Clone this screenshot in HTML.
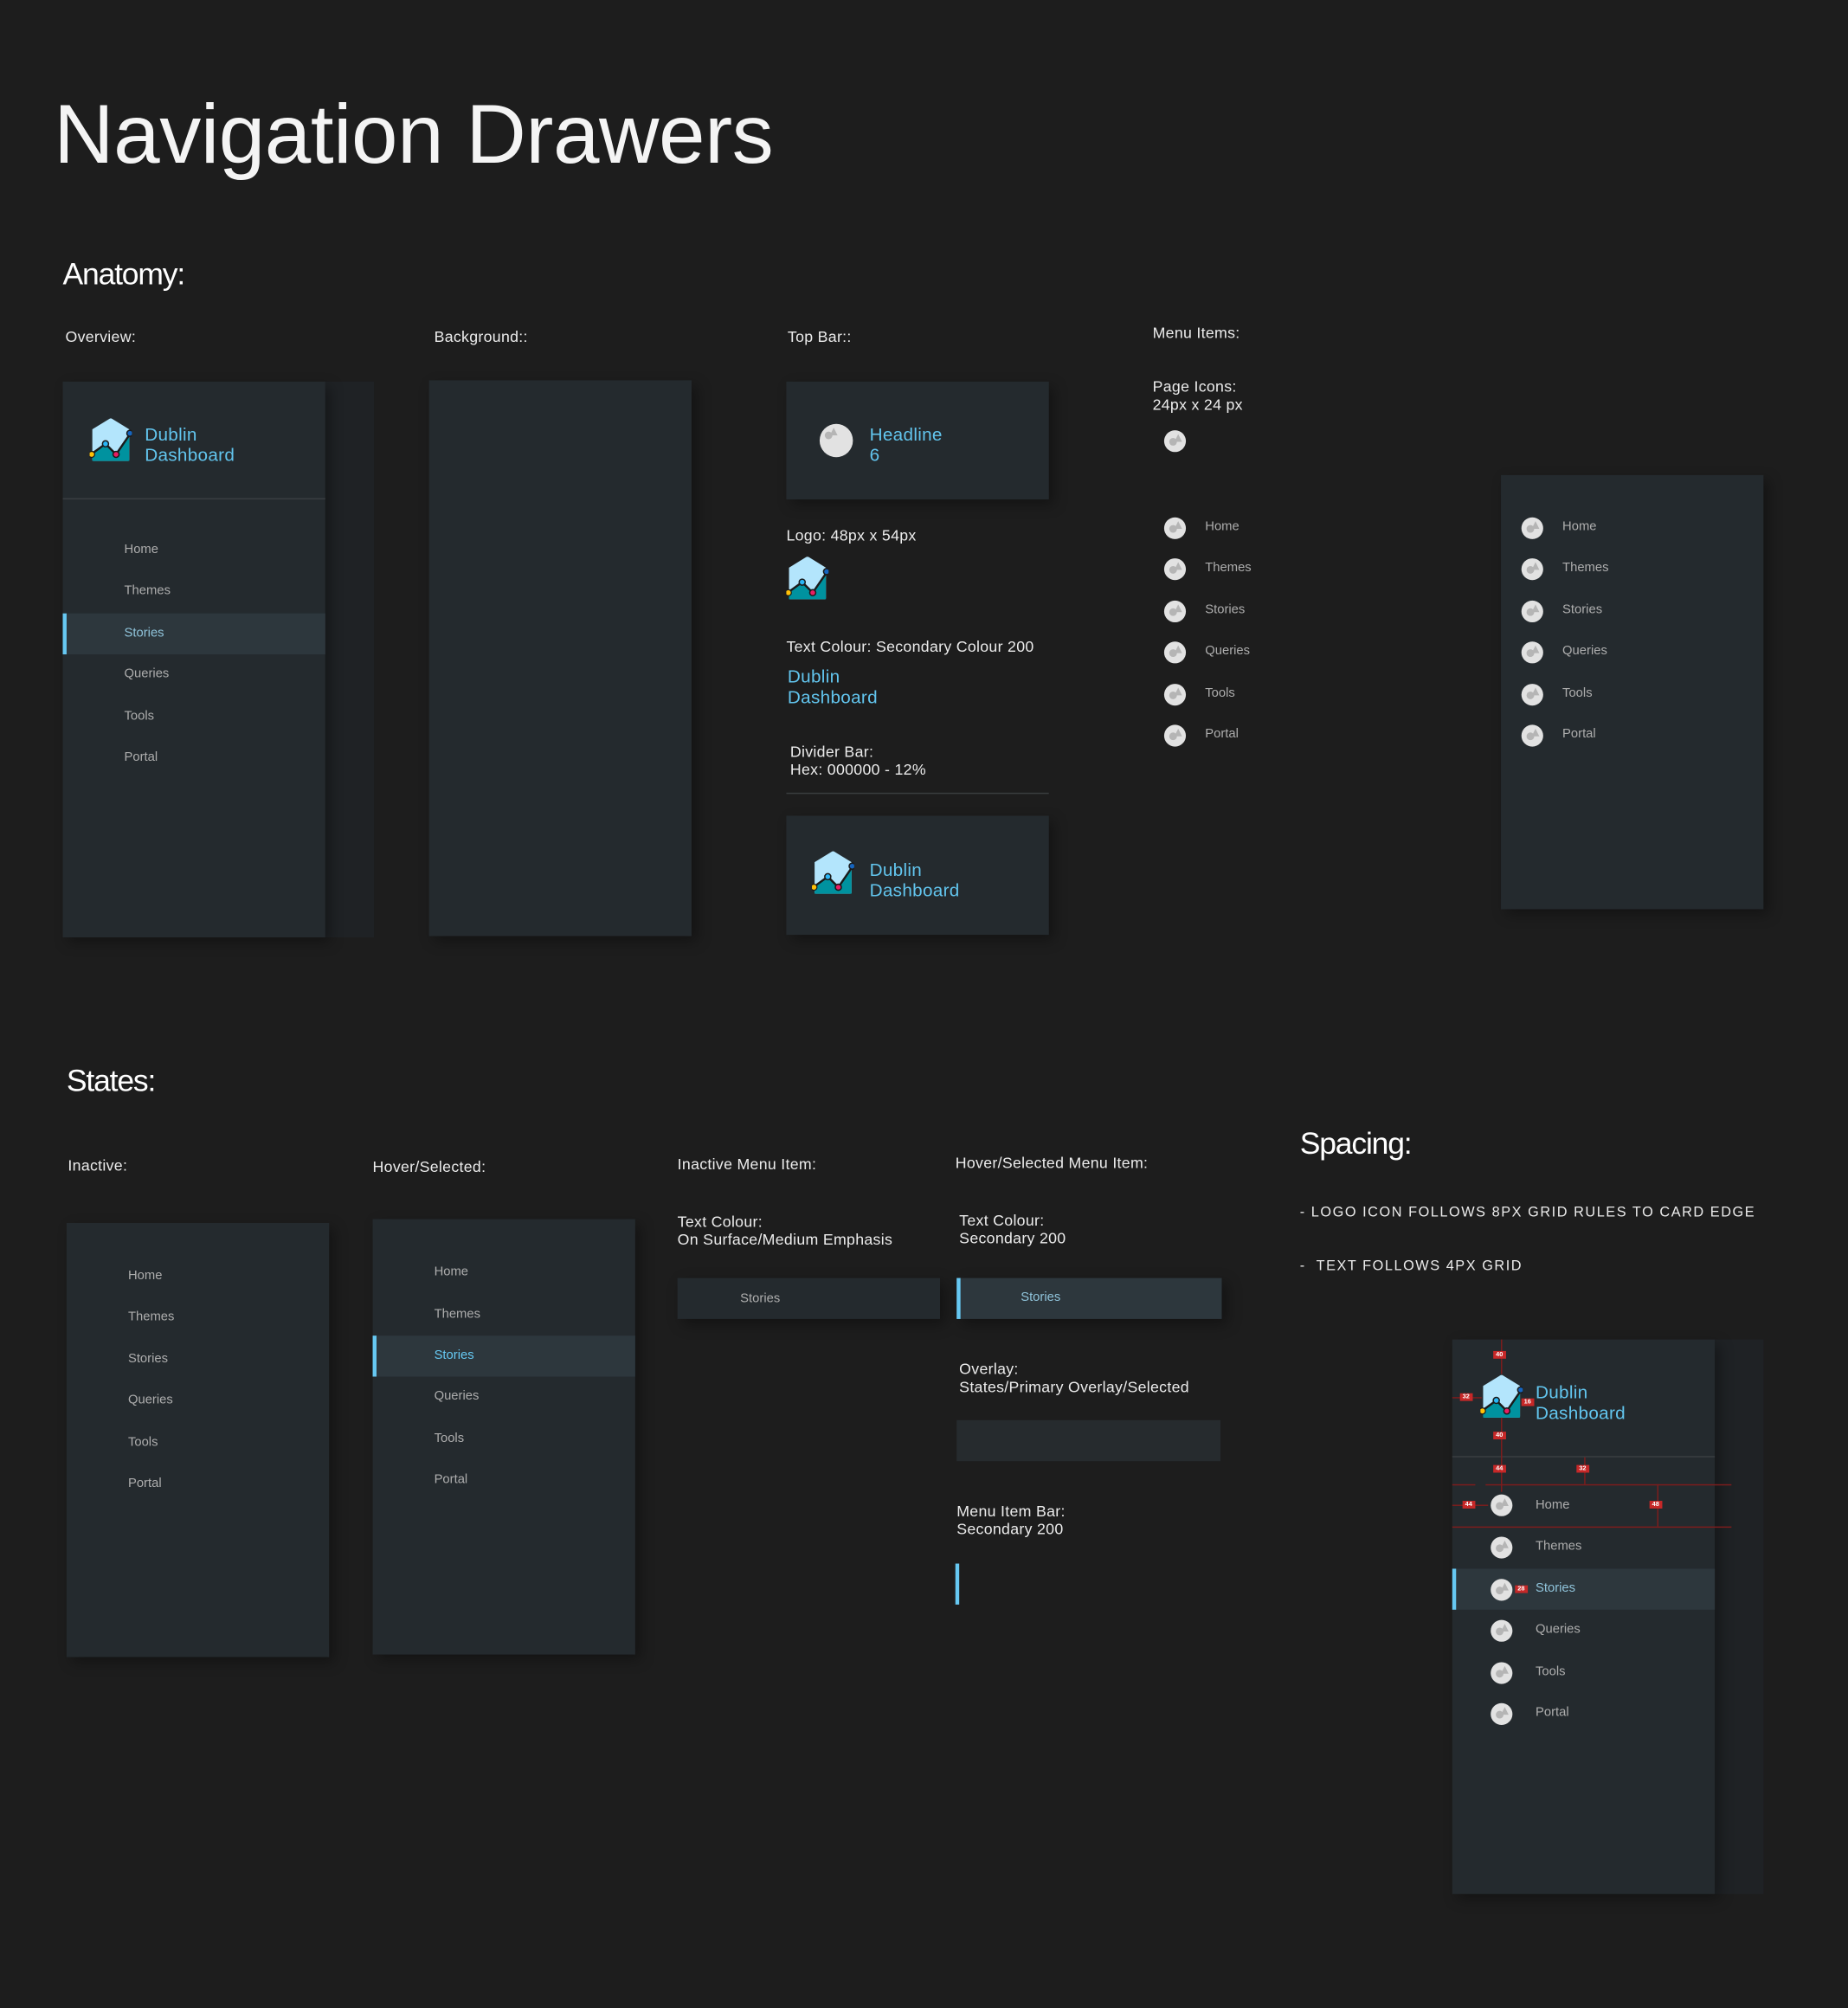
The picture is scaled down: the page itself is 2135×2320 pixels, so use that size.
<!DOCTYPE html>
<html><head><meta charset="utf-8">
<style>
html,body{margin:0;padding:0;background:#1d1d1d;}
body{width:2135px;height:2320px;overflow:hidden;position:relative;font-family:"Liberation Sans",sans-serif;}
#s{position:absolute;left:0;top:0;width:1443px;height:1568px;transform:scale(1.47955);transform-origin:0 0;}
#s div,#s svg,#s span{position:absolute;}
.t{color:#ececec;font-size:12px;line-height:14px;white-space:nowrap;letter-spacing:0.2px}
.h{color:#fff;font-size:24px;line-height:26px;white-space:nowrap;letter-spacing:-0.8px}
.card{background:#242a2e;box-shadow:4px 4px 10px rgba(0,0,0,.35);}
.sh{background:#1f2225;}
.m{color:#adadad;font-size:10px;line-height:12px;white-space:nowrap}
.dd{color:#62c5ee;font-size:14px;line-height:16px;white-space:nowrap;letter-spacing:0.2px}
.sel{background:#2d373d;}
.bar{background:#66c8f2;}
.ic{width:17px;height:17px;border-radius:50%;background:#e2e2e2;}
.ic:before{content:"";position:absolute;left:4px;top:6px;width:6px;height:6px;border-radius:50%;background:#b5b5b5}
.ic:after{content:"";position:absolute;left:8px;top:3px;border-left:3px solid transparent;border-right:3px solid transparent;border-bottom:6px solid #b5b5b5}
.r{background:#c62828;color:#fff;font-size:5px;line-height:6px;padding:0 2px;font-weight:bold}
.rl{background:#7d1d1d}
</style></head><body><div id="s">

<div style="left:42px;top:68px;color:#f4f4f4;font-size:65px;line-height:74px;white-space:nowrap;letter-spacing:-0.3px;font-weight:normal">Navigation Drawers</div>

<div class="h" style="left:49px;top:202px">Anatomy:</div>
<div class="t" style="left:51px;top:256px">Overview:</div>
<div class="t" style="left:339px;top:256px">Background::</div>
<div class="t" style="left:615px;top:256px">Top Bar::</div>
<div class="t" style="left:900px;top:253px">Menu Items:</div>

<!-- Overview -->
<div class="sh" style="left:254px;top:298px;width:38px;height:434px"></div>
<div class="card" style="left:49px;top:298px;width:205px;height:434px"></div>
<svg style="left:70px;top:326px" width="33" height="35" viewBox="0 0 32 34"><path d="M2,9 L15,1 Q16,0.4 17,1 L30,9 L30,32 Q30,33 29,33 L3,33 Q2,33 2,32 Z" fill="#b3e5fc"/><path d="M2,28 L12,20 L20,28 L30,12 L30,33 L2,33 Z" fill="#00929f"/><path d="M1,28 L12,20 L20,28 L31,12" fill="none" stroke="#1a1a1a" stroke-width="1.6"/><circle cx="1.5" cy="28" r="2.3" fill="#ffc107" stroke="#1a1a1a" stroke-width=".8"/><circle cx="12" cy="20" r="2.3" fill="#29b6f6" stroke="#1a1a1a" stroke-width="1"/><circle cx="20" cy="28" r="2.3" fill="#e91e63" stroke="#1a1a1a" stroke-width="1"/><circle cx="30.5" cy="12" r="2.3" fill="#1565c0" stroke="#1a1a1a" stroke-width="1"/></svg>
<div class="dd" style="left:113px;top:331px">Dublin<br>Dashboard</div>
<div style="left:49px;top:389px;width:205px;height:1px;background:#3a3f42"></div>
<div class="sel" style="left:49px;top:479px;width:205px;height:32px"></div>
<div class="bar" style="left:49px;top:479px;width:3px;height:32px"></div>
<div class="m" style="left:97px;top:424px">Home</div>
<div class="m" style="left:97px;top:456px">Themes</div>
<div class="m" style="left:97px;top:489px;color:#8fc3da">Stories</div>
<div class="m" style="left:97px;top:521px">Queries</div>
<div class="m" style="left:97px;top:554px">Tools</div>
<div class="m" style="left:97px;top:586px">Portal</div>

<!-- Background -->
<div class="card" style="left:335px;top:297px;width:205px;height:434px"></div>

<!-- Top bar -->
<div class="card" style="left:614px;top:298px;width:205px;height:92px"></div>
<div class="ic" style="left:640px;top:331px;width:26px;height:26px"></div>
<div class="dd" style="left:679px;top:331px">Headline<br>6</div>
<div class="t" style="left:614px;top:411px">Logo: 48px x 54px</div>
<svg style="left:614px;top:434px" width="33" height="35" viewBox="0 0 32 34"><path d="M2,9 L15,1 Q16,0.4 17,1 L30,9 L30,32 Q30,33 29,33 L3,33 Q2,33 2,32 Z" fill="#b3e5fc"/><path d="M2,28 L12,20 L20,28 L30,12 L30,33 L2,33 Z" fill="#00929f"/><path d="M1,28 L12,20 L20,28 L31,12" fill="none" stroke="#1a1a1a" stroke-width="1.6"/><circle cx="1.5" cy="28" r="2.3" fill="#ffc107" stroke="#1a1a1a" stroke-width=".8"/><circle cx="12" cy="20" r="2.3" fill="#29b6f6" stroke="#1a1a1a" stroke-width="1"/><circle cx="20" cy="28" r="2.3" fill="#e91e63" stroke="#1a1a1a" stroke-width="1"/><circle cx="30.5" cy="12" r="2.3" fill="#1565c0" stroke="#1a1a1a" stroke-width="1"/></svg>
<div class="t" style="left:614px;top:498px">Text Colour: Secondary Colour 200</div>
<div class="dd" style="left:615px;top:520px">Dublin<br>Dashboard</div>
<div class="t" style="left:617px;top:580px;line-height:14px">Divider Bar:<br>Hex: 000000 - 12%</div>
<div style="left:614px;top:619px;width:205px;height:1px;background:#3a3d3f"></div>
<div class="card" style="left:614px;top:637px;width:205px;height:93px"></div>
<svg style="left:634px;top:664px" width="33" height="35" viewBox="0 0 32 34"><path d="M2,9 L15,1 Q16,0.4 17,1 L30,9 L30,32 Q30,33 29,33 L3,33 Q2,33 2,32 Z" fill="#b3e5fc"/><path d="M2,28 L12,20 L20,28 L30,12 L30,33 L2,33 Z" fill="#00929f"/><path d="M1,28 L12,20 L20,28 L31,12" fill="none" stroke="#1a1a1a" stroke-width="1.6"/><circle cx="1.5" cy="28" r="2.3" fill="#ffc107" stroke="#1a1a1a" stroke-width=".8"/><circle cx="12" cy="20" r="2.3" fill="#29b6f6" stroke="#1a1a1a" stroke-width="1"/><circle cx="20" cy="28" r="2.3" fill="#e91e63" stroke="#1a1a1a" stroke-width="1"/><circle cx="30.5" cy="12" r="2.3" fill="#1565c0" stroke="#1a1a1a" stroke-width="1"/></svg>
<div class="dd" style="left:679px;top:671px">Dublin<br>Dashboard</div>

<!-- Menu items -->
<div class="t" style="left:900px;top:295px">Page Icons:<br>24px x 24 px</div>
<div class="ic" style="left:909px;top:336px"></div>
<div class="ic" style="left:909px;top:404px"></div><div class="m" style="left:941px;top:406px">Home</div>
<div class="ic" style="left:909px;top:436px"></div><div class="m" style="left:941px;top:438px">Themes</div>
<div class="ic" style="left:909px;top:469px"></div><div class="m" style="left:941px;top:471px">Stories</div>
<div class="ic" style="left:909px;top:501px"></div><div class="m" style="left:941px;top:503px">Queries</div>
<div class="ic" style="left:909px;top:534px"></div><div class="m" style="left:941px;top:536px">Tools</div>
<div class="ic" style="left:909px;top:566px"></div><div class="m" style="left:941px;top:568px">Portal</div>

<div class="card" style="left:1172px;top:371px;width:205px;height:339px"></div>
<div class="ic" style="left:1188px;top:404px"></div><div class="m" style="left:1220px;top:406px">Home</div>
<div class="ic" style="left:1188px;top:436px"></div><div class="m" style="left:1220px;top:438px">Themes</div>
<div class="ic" style="left:1188px;top:469px"></div><div class="m" style="left:1220px;top:471px">Stories</div>
<div class="ic" style="left:1188px;top:501px"></div><div class="m" style="left:1220px;top:503px">Queries</div>
<div class="ic" style="left:1188px;top:534px"></div><div class="m" style="left:1220px;top:536px">Tools</div>
<div class="ic" style="left:1188px;top:566px"></div><div class="m" style="left:1220px;top:568px">Portal</div>

<!-- States -->
<div class="h" style="left:52px;top:832px">States:</div>
<div class="t" style="left:53px;top:903px">Inactive:</div>
<div class="t" style="left:291px;top:904px">Hover/Selected:</div>
<div class="t" style="left:529px;top:902px">Inactive Menu Item:</div>
<div class="t" style="left:746px;top:901px">Hover/Selected Menu Item:</div>

<div class="card" style="left:52px;top:955px;width:205px;height:339px"></div>
<div class="m" style="left:100px;top:991px">Home</div>
<div class="m" style="left:100px;top:1023px">Themes</div>
<div class="m" style="left:100px;top:1056px">Stories</div>
<div class="m" style="left:100px;top:1088px">Queries</div>
<div class="m" style="left:100px;top:1121px">Tools</div>
<div class="m" style="left:100px;top:1153px">Portal</div>

<div class="card" style="left:291px;top:952px;width:205px;height:340px"></div>
<div class="sel" style="left:291px;top:1043px;width:205px;height:32px"></div>
<div class="bar" style="left:291px;top:1043px;width:3px;height:32px"></div>
<div class="m" style="left:339px;top:988px">Home</div>
<div class="m" style="left:339px;top:1021px">Themes</div>
<div class="m" style="left:339px;top:1053px;color:#66c8f2">Stories</div>
<div class="m" style="left:339px;top:1085px">Queries</div>
<div class="m" style="left:339px;top:1118px">Tools</div>
<div class="m" style="left:339px;top:1150px">Portal</div>

<div class="t" style="left:529px;top:947px">Text Colour:<br>On Surface/Medium Emphasis</div>
<div class="card" style="left:529px;top:998px;width:205px;height:32px"></div>
<div class="m" style="left:578px;top:1009px">Stories</div>

<div class="t" style="left:749px;top:946px">Text Colour:<br>Secondary 200</div>
<div class="sel" style="left:747px;top:998px;width:207px;height:32px;box-shadow:4px 4px 10px rgba(0,0,0,.35)"></div>
<div class="bar" style="left:747px;top:998px;width:3px;height:32px"></div>
<div class="m" style="left:797px;top:1008px;color:#8fc3da">Stories</div>

<div class="t" style="left:749px;top:1062px">Overlay:<br>States/Primary Overlay/Selected</div>
<div style="left:747px;top:1109px;width:206px;height:32px;background:#262b2e"></div>
<div class="t" style="left:747px;top:1173px">Menu Item Bar:<br>Secondary 200</div>
<div class="bar" style="left:746px;top:1221px;width:3px;height:32px"></div>

<!-- Spacing -->
<div class="h" style="left:1015px;top:881px">Spacing:</div>
<div class="t" style="left:1015px;top:940px;font-size:11px;letter-spacing:1.05px">- LOGO ICON FOLLOWS 8PX GRID RULES TO CARD EDGE</div>
<div class="t" style="left:1015px;top:982px;font-size:11px;letter-spacing:1.05px">-&nbsp; TEXT FOLLOWS 4PX GRID</div>

<div class="sh" style="left:1339px;top:1046px;width:38px;height:433px"></div>
<div class="card" style="left:1134px;top:1046px;width:205px;height:433px"></div>
<svg style="left:1156px;top:1073px" width="33" height="35" viewBox="0 0 32 34"><path d="M2,9 L15,1 Q16,0.4 17,1 L30,9 L30,32 Q30,33 29,33 L3,33 Q2,33 2,32 Z" fill="#b3e5fc"/><path d="M2,28 L12,20 L20,28 L30,12 L30,33 L2,33 Z" fill="#00929f"/><path d="M1,28 L12,20 L20,28 L31,12" fill="none" stroke="#1a1a1a" stroke-width="1.6"/><circle cx="1.5" cy="28" r="2.3" fill="#ffc107" stroke="#1a1a1a" stroke-width=".8"/><circle cx="12" cy="20" r="2.3" fill="#29b6f6" stroke="#1a1a1a" stroke-width="1"/><circle cx="20" cy="28" r="2.3" fill="#e91e63" stroke="#1a1a1a" stroke-width="1"/><circle cx="30.5" cy="12" r="2.3" fill="#1565c0" stroke="#1a1a1a" stroke-width="1"/></svg>
<div class="dd" style="left:1199px;top:1079px">Dublin<br>Dashboard</div>
<div style="left:1134px;top:1137px;width:205px;height:1px;background:#3a3f42"></div>
<div class="sel" style="left:1134px;top:1225px;width:205px;height:32px"></div>
<div class="bar" style="left:1134px;top:1225px;width:3px;height:32px"></div>
<div class="ic" style="left:1164px;top:1167px"></div><div class="m" style="left:1199px;top:1170px">Home</div>
<div class="ic" style="left:1164px;top:1200px"></div><div class="m" style="left:1199px;top:1202px">Themes</div>
<div class="ic" style="left:1164px;top:1233px"></div><div class="m" style="left:1199px;top:1235px;color:#8fc3da">Stories</div>
<div class="ic" style="left:1164px;top:1265px"></div><div class="m" style="left:1199px;top:1267px">Queries</div>
<div class="ic" style="left:1164px;top:1298px"></div><div class="m" style="left:1199px;top:1300px">Tools</div>
<div class="ic" style="left:1164px;top:1330px"></div><div class="m" style="left:1199px;top:1332px">Portal</div>
<!-- red lines -->
<div class="rl" style="left:1172px;top:1046px;width:1px;height:27px"></div>
<div class="rl" style="left:1134px;top:1091px;width:23px;height:1px"></div>
<div class="rl" style="left:1172px;top:1107px;width:1px;height:58px"></div>
<div class="rl" style="left:1237px;top:1138px;width:1px;height:21px"></div>
<div class="rl" style="left:1134px;top:1159px;width:18px;height:1px"></div>
<div class="rl" style="left:1160px;top:1159px;width:192px;height:1px"></div>
<div class="rl" style="left:1134px;top:1192px;width:218px;height:1px"></div>
<div class="rl" style="left:1294px;top:1159px;width:1px;height:33px"></div>
<div class="rl" style="left:1134px;top:1175px;width:28px;height:1px"></div>
<span class="r" style="left:1166px;top:1055px">40</span>
<span class="r" style="left:1140px;top:1088px">32</span>
<span class="r" style="left:1188px;top:1092px">16</span>
<span class="r" style="left:1166px;top:1118px">40</span>
<span class="r" style="left:1166px;top:1144px">44</span>
<span class="r" style="left:1231px;top:1144px">32</span>
<span class="r" style="left:1142px;top:1172px">44</span>
<span class="r" style="left:1288px;top:1172px">48</span>
<span class="r" style="left:1183px;top:1238px">28</span>
</div></body></html>
